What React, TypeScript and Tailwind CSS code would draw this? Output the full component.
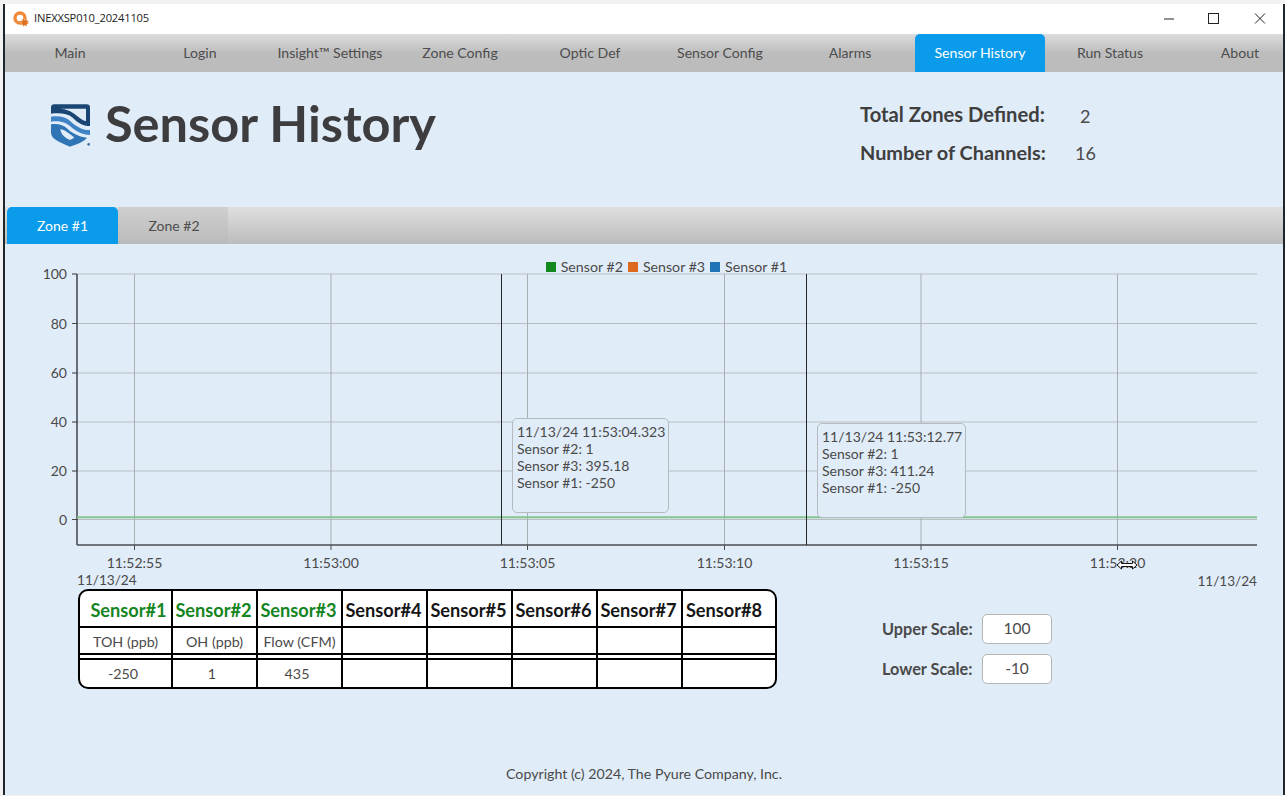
const navItems = ['Main', 'Login', 'Insight™ Settings', 'Zone Config', 'Optic Def', 'Sensor Config', 'Alarms', 'Sensor History', 'Run Status', 'About']

const yTicks = [
  { label: '100', y: 274 },
  { label: '80', y: 323.5 },
  { label: '60', y: 373 },
  { label: '40', y: 422 },
  { label: '20', y: 471 },
  { label: '0', y: 519.5 },
]

const xTicks = [
  { label: '11:52:55', x: 134.5 },
  { label: '11:53:00', x: 331 },
  { label: '11:53:05', x: 527.5 },
  { label: '11:53:10', x: 724.5 },
  { label: '11:53:15', x: 921 },
  { label: '11:53:20', x: 1117.5 },
]

const sensors = [
  { name: 'Sensor#1', unit: 'TOH (ppb)', value: '-250', active: true, nameClass: 'pl-[6px]' },
  { name: 'Sensor#2', unit: 'OH (ppb)', value: '1', active: true, nameClass: 'pr-[2px]' },
  { name: 'Sensor#3', unit: 'Flow (CFM)', value: '435', active: true, nameClass: 'pr-[2px]' },
  { name: 'Sensor#4', unit: '', value: '', active: false, nameClass: 'pr-[2px]' },
  { name: 'Sensor#5', unit: '', value: '', active: false, nameClass: 'pr-[2px]' },
  { name: 'Sensor#6', unit: '', value: '', active: false, nameClass: 'pr-[2px]' },
  { name: 'Sensor#7', unit: '', value: '', active: false, nameClass: 'pr-[2px]' },
  { name: 'Sensor#8', unit: '', value: '', active: false, nameClass: 'pr-[10px]' },
]

function AppIcon() {
  return (
    <svg width="16" height="16" viewBox="0 0 16 16" className="shrink-0">
      <circle cx="7" cy="7" r="5" fill="none" stroke="#ee8a3a" strokeWidth="3.4" />
      <circle cx="11.5" cy="11.5" r="3.6" fill="#fff" />
      <circle cx="11.5" cy="11.5" r="2.8" fill="#e0701f" />
      <circle cx="11.5" cy="11.5" r="3.4" fill="none" stroke="#e0701f" strokeWidth="1.2" strokeDasharray="1.4 1.3" />
    </svg>
  )
}

function ShieldLogo() {
  return (
    <svg width="40" height="43" viewBox="0 0 120 127" className="shrink-0">
      <path d="M0 10 Q0 0 10 0 H107 Q117 0 117 10 V65 C95 65 80 55 65 40 C50 27 25 25 0 28 Z" fill="#1b4674" />
      <path d="M30 13 H105 V50 C95 50 80 35 65 25 C55 18 45 15 30 13 Z" fill="#e0ecf8" />
      <path d="M0 37 C25 33 45 38 60 52 C75 66 95 78 117 77 V92 C95 92 75 82 58 66 C45 53 20 48 0 52 Z" fill="#3f83c4" />
      <path d="M0 60 C20 57 38 62 50 74 C65 88 85 98 108 100 C100 112 75 120 57 127 C30 115 0 105 0 85 Z" fill="#2f74b5" />
      <path d="M28 75 C40 75 55 88 70 100 L57 107 C40 100 30 90 28 75 Z" fill="#e0ecf8" />
      <circle cx="113" cy="120" r="4" fill="#3f6f9f" />
    </svg>
  )
}

function Chart() {
  return (
    <svg width="1285" height="346" viewBox="0 244 1285 346" className="block absolute left-0 top-0">
      {yTicks.map((t) => (
        <g key={t.label}>
          <line x1="72" x2="1257" y1={t.y} y2={t.y} stroke="#b9bec3" strokeWidth="1.2" />
          <line x1="72" x2="77" y1={t.y} y2={t.y} stroke="#4a4a4a" strokeWidth="1" />
          <text x="67" y={t.y + 5} textAnchor="end" fontSize="14" fill="#4a4a4a" fontFamily="Lato, sans-serif">{t.label}</text>
        </g>
      ))}
      {xTicks.map((t) => (
        <g key={t.label}>
          <line x1={t.x} x2={t.x} y1="274" y2="545" stroke="#a9aeb3" strokeWidth="1" />
          <line x1={t.x} x2={t.x} y1="545" y2="550" stroke="#4a4a4a" strokeWidth="1" />
          <text x={t.x} y="568" textAnchor="middle" fontSize="14" fill="#4a4a4a" fontFamily="Lato, sans-serif">{t.label}</text>
        </g>
      ))}
      <text x="77" y="585" fontSize="13.6" fill="#4a4a4a" fontFamily="Lato, sans-serif">11/13/24</text>
      <text x="1257" y="586" textAnchor="end" fontSize="13.6" fill="#4a4a4a" fontFamily="Lato, sans-serif">11/13/24</text>
      <line x1="77" x2="77" y1="274" y2="545" stroke="#34383c" strokeWidth="1.4" />
      <line x1="77" x2="1257" y1="545" y2="545" stroke="#4a4e52" strokeWidth="1.4" />
      <line x1="77" x2="1257" y1="517.3" y2="517.3" stroke="#85c48f" strokeWidth="2" />
      <line x1="501.5" x2="501.5" y1="274" y2="545" stroke="#23272b" strokeWidth="1" />
      <line x1="806.5" x2="806.5" y1="274" y2="545" stroke="#23272b" strokeWidth="1" />
    </svg>
  )
}

function ChartTooltip({ lines, className }: { lines: string[]; className: string }) {
  return (
    <div className={`absolute rounded-[5px] border border-[#b4bac0] bg-[#e0ecf8] pl-[4px] pt-[4px] text-[14px] leading-[17px] text-[#4a4a4a] ${className}`}>
      {lines.map((l) => (
        <div key={l} className="whitespace-nowrap">{l}</div>
      ))}
    </div>
  )
}

function LegendItem({ color, label }: { color: string; label: string }) {
  return (
    <div className="flex items-center gap-[5px]">
      <span className={`w-[10px] h-[10px] ${color}`} />
      <span>{label}</span>
    </div>
  )
}

export default function App() {
  return (
    <div className="w-[1285px] h-[796px] overflow-hidden flex flex-col bg-[#f2f2f2] pt-[4px] font-['Lato',sans-serif]">
      <div className="flex-1 flex flex-col min-h-0 border-x-2 border-[#20262a] ml-[3px] mb-[1px] bg-[#e0ecf8] overflow-hidden">
        {/* Title bar */}
        <div className="h-[30px] bg-white flex items-center pl-[8px] shrink-0">
          <AppIcon />
          <span className="ml-[5px] pb-[1px] text-[11.2px] text-[#222] font-['Open_Sans',sans-serif] tracking-[-0.2px]">INEXXSP010_20241105</span>
          <div className="ml-auto flex items-center text-[#222]">
            <svg width="46" height="30" viewBox="0 0 46 30"><line x1="19" x2="29" y1="15" y2="15" stroke="#222" strokeWidth="1" /></svg>
            <svg width="46" height="30" viewBox="0 0 46 30"><rect x="17.5" y="9.5" width="10" height="10" fill="none" stroke="#222" strokeWidth="1" /></svg>
            <svg width="46" height="30" viewBox="0 0 46 30"><path d="M18 9.5 L28 19.5 M28 9.5 L18 19.5" stroke="#222" strokeWidth="1" /></svg>
          </div>
        </div>

        {/* Nav */}
        <div className="h-[38px] shrink-0 flex bg-gradient-to-b from-[#dcdcdc] via-[#bdbdbd] via-50% to-[#bbbbbb]">
          {navItems.map((item) => (
            <div
              key={item}
              className={`w-[130px] shrink-0 flex items-center justify-center pb-[1px] text-[14.1px] ${
                item === 'Sensor History' ? 'bg-[#0a9bea] text-white rounded-t-[5px]' : 'text-[#4d4d4d]'
              }`}
            >
              {item}
            </div>
          ))}
        </div>

        {/* Page header */}
        <div className="h-[135px] shrink-0 flex">
          <div className="flex items-start pl-[46px] pt-[32px] w-[855px]">
            <ShieldLogo />
            <h1 className="ml-[14px] text-[50.5px] leading-[44px] font-bold text-[#3d3d3f] mt-[-3px] whitespace-nowrap">Sensor History</h1>
          </div>
          <div className="pt-[29px]">
            <div className="flex items-center h-[26px]">
              <span className="w-[220px] text-[20.2px] font-bold text-[#3f3f3f]">Total Zones Defined:</span>
              <span className="text-[18px] text-[#4a4a4a] pt-[4px]">2</span>
            </div>
            <div className="flex items-center h-[26px] mt-[13px]">
              <span className="w-[215px] text-[19.9px] font-bold text-[#3f3f3f] whitespace-nowrap">Number of Channels:</span>
              <span className="text-[18px] text-[#4a4a4a]">16</span>
            </div>
          </div>
        </div>

        {/* Zone tabs */}
        <div className="h-[37px] shrink-0 flex pl-[2px] bg-gradient-to-b from-[#dfdfdf] to-[#bcbcbc]">
          <div className="w-[111px] rounded-t-[5px] bg-[#0a9bea] text-white flex items-center justify-center text-[14px]">Zone #1</div>
          <div className="w-[110px] pl-[2px] bg-gradient-to-b from-[#cfcfcf] to-[#bbbbbb] text-[#4d4d4d] flex items-center justify-center text-[14px]">Zone #2</div>
        </div>

        {/* Chart, drawn in page coordinates from y=244 */}
        <div className="relative h-[345px] shrink-0 -ml-[5px]">
          <Chart />
          <div className="absolute left-0 right-0 top-[14px] flex justify-center gap-[5px] text-[14.2px] leading-[17px] text-[#4a4a4a] pl-[50px]">
            <LegendItem color="bg-[#12881e]" label="Sensor #2" />
            <LegendItem color="bg-[#dd6a1c]" label="Sensor #3" />
            <LegendItem color="bg-[#1f74b8]" label="Sensor #1" />
          </div>
          <ChartTooltip
            className="left-[512px] top-[174px] w-[157px] h-[95px]"
            lines={['11/13/24 11:53:04.323', 'Sensor #2: 1', 'Sensor #3: 395.18', 'Sensor #1: -250']}
          />
          <ChartTooltip
            className="left-[817px] top-[179px] w-[149px] h-[95px]"
            lines={['11/13/24 11:53:12.77', 'Sensor #2: 1', 'Sensor #3: 411.24', 'Sensor #1: -250']}
          />
          {/* mouse cursor */}
          <svg width="22" height="10" viewBox="0 0 22 10" className="absolute left-[1116px] top-[316px]">
            <path d="M1 5 L5.5 1 V3.5 H16.5 V1 L21 5 L16.5 9 V6.5 H5.5 V9 Z" fill="#fff" stroke="#111" strokeWidth="1" />
          </svg>
        </div>

        {/* Readings and scale */}
        <div className="flex shrink-0 pl-[73px]">
          <div className="w-[699px] h-[100px] rounded-[10px] border-2 border-black bg-white overflow-hidden grid grid-cols-[93px_repeat(6,85px)_1fr] grid-rows-[37px_27px_5px_1fr]">
            {sensors.map((s, i) => (
              <div key={s.name} className={`flex items-center justify-center pt-[5px] border-b-2 border-black text-[18.2px] font-bold ${s.nameClass} ${i < 7 ? 'border-r-2' : ''} ${s.active ? 'text-[#15851f]' : 'text-[#161616]'}`}>
                {s.name}
              </div>
            ))}
            {sensors.map((s, i) => (
              <div key={s.name} className={`flex items-center justify-center pt-[3px] text-[14.3px] text-[#4a4a4a] border-b-2 border-black ${i < 7 ? 'border-r-2' : ''}`}>
                {s.unit}
              </div>
            ))}
            {sensors.map((s, i) => (
              <div key={s.name} className={`border-b-2 border-black ${i < 7 ? 'border-r-2' : ''}`} />
            ))}
            {sensors.map((s, i) => (
              <div key={s.name} className={`flex items-center justify-center pr-[5px] text-[14.3px] text-[#4a4a4a] ${i < 7 ? 'border-r-2 border-black' : ''}`}>
                {s.value}
              </div>
            ))}
          </div>
          <div className="ml-[105px] pt-[25px] flex flex-col gap-[10px]">
            <div className="flex items-center">
              <span className="w-[100px] text-[16.3px] font-bold text-[#4a4a4a]">Upper Scale:</span>
              <div className="w-[70px] h-[30px] rounded-[5px] border border-[#b5b5b5] bg-white flex items-center justify-center text-[15.5px] text-[#4a4a4a]">100</div>
            </div>
            <div className="flex items-center">
              <span className="w-[100px] text-[16.3px] font-bold text-[#4a4a4a]">Lower Scale:</span>
              <div className="w-[70px] h-[30px] rounded-[5px] border border-[#b5b5b5] bg-white flex items-center justify-center text-[15.5px] text-[#4a4a4a]">-10</div>
            </div>
          </div>
        </div>

        {/* Footer */}
        <div className="mt-[74px] text-center text-[14.2px] text-[#4a4a4a]">Copyright (c) 2024, The Pyure Company, Inc.</div>
      </div>
    </div>
  )
}
